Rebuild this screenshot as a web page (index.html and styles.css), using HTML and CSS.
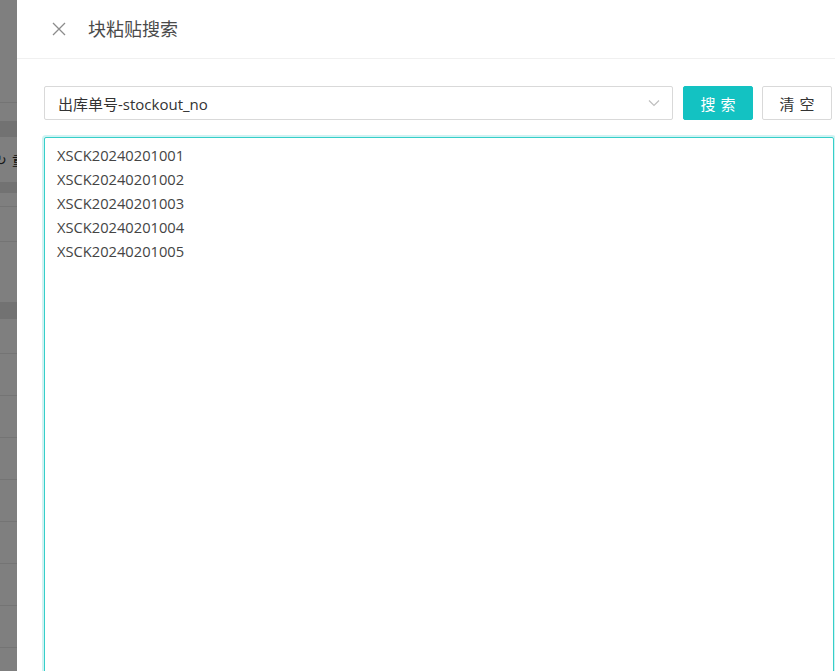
FILE: index.html
```html
<!DOCTYPE html>
<html lang="zh-CN">
<head>
    <meta charset="UTF-8">
    <meta name="viewport" content="width=device-width, initial-scale=1.0">
    <title>块粘贴搜索</title>
    <link rel="stylesheet" href="styles.css">
</head>
<body>
    <!-- page behind the drawer -->
    <div class="page">
        <div class="page-top"></div>
        <div class="page-space"></div>
        <div class="page-band"></div>
        <div class="page-toolbar"><span class="reload">&#8635;</span> <span class="reset">重置</span></div>
        <div class="page-band small"></div>
        <div class="page-row short"></div>
        <div class="page-row mid"></div>
        <div class="page-row tall"></div>
        <div class="page-band head"></div>
        <div class="page-row first"></div>
        <div class="page-row"></div>
        <div class="page-row"></div>
        <div class="page-row"></div>
        <div class="page-row"></div>
        <div class="page-row"></div>
        <div class="page-row"></div>
        <div class="page-row"></div>
    </div>

    <div class="mask"></div>

    <div class="drawer">
        <div class="drawer-header">
            <span class="drawer-close">
                <svg width="14" height="14" viewBox="0 0 14 14"><path d="M1 1 L13 13 M13 1 L1 13" stroke="#8c8c8c" stroke-width="1.3" fill="none"/></svg>
            </span>
            <div class="drawer-title">块粘贴搜索</div>
        </div>
        <div class="drawer-body">
            <div class="search-row">
                <div class="select">
                    <span class="select-value">出库单号-stockout_no</span>
                    <svg class="select-arrow" width="12" height="8" viewBox="0 0 12 8"><path d="M1 1.5 L6 6.5 L11 1.5" stroke="#bfbfbf" stroke-width="1.2" fill="none"/></svg>
                </div>
                <button class="btn btn-primary"><span>搜索</span></button>
                <button class="btn"><span>清空</span></button>
            </div>
            <textarea class="paste-box">XSCK20240201001
XSCK20240201002
XSCK20240201003
XSCK20240201004
XSCK20240201005</textarea>
        </div>
    </div>
</body>
</html>
```

FILE: styles.css
```css
:root {
    --primary-color: #13c2c2;
    --border-color: #d9d9d9;
    --text-color: #333333;
}

body, html {
    height: 100%;
    margin: 0;
    overflow: hidden;
    font-family: "Open Sans", "Noto Sans CJK SC", sans-serif;
    background-color: #ffffff;
    color: var(--text-color);
}

/* background page */
.page {
    width: 100%;
}

.page-top {
    height: 102px;
    border-bottom: 1px solid #e8e8e8;
}

.page-space {
    height: 18px;
}

.page-band {
    height: 16px;
    background-color: #e4e4e4;
}

.page-band.small {
    height: 11px;
}

.page-band.head {
    height: 17px;
}

.page-toolbar {
    height: 45px;
    display: flex;
    align-items: center;
    margin-left: -5px;
    gap: 5px;
    font-size: 14px;
}

.reload {
    color: #333;
}

.reset {
    color: #222;
}

.page-row {
    height: 41px;
    border-bottom: 1px solid #e8e8e8;
}

.page-row.short {
    height: 13px;
}

.page-row.mid {
    height: 34px;
}

.page-row.tall {
    height: 60px;
    border-bottom: none;
}

.page-row.first {
    height: 34px;
}

.mask {
    position: fixed;
    inset: 0;
    background-color: rgba(0, 0, 0, 0.5);
}

/* drawer */
.drawer {
    position: fixed;
    top: 0;
    bottom: 0;
    left: 17px;
    right: 0;
    background-color: #ffffff;
    display: flex;
    flex-direction: column;
}

.drawer-header {
    flex-shrink: 0;
    height: 58px;
    border-bottom: 1px solid #f0f0f0;
    display: flex;
    align-items: center;
    padding-left: 35px;
}

.drawer-close {
    display: flex;
    width: 14px;
    height: 14px;
    margin-right: 22px;
}

.drawer-title {
    font-size: 18px;
    color: #4a4a4a;
    line-height: 24px;
}

.drawer-body {
    flex-shrink: 0;
    padding: 27px 0 0 27px;
    display: flex;
    flex-direction: column;
}

.search-row {
    display: flex;
    align-items: center;
    margin-right: 3px;
}

.select {
    flex: 1;
    height: 34px;
    border: 1px solid var(--border-color);
    border-radius: 2px;
    box-sizing: border-box;
    display: flex;
    align-items: center;
    justify-content: space-between;
    padding: 0 12px 0 13px;
    font-size: 15px;
    color: #333;
}

.btn {
    width: 70px;
    height: 34px;
    margin-left: 9px;
    border: 1px solid var(--border-color);
    border-radius: 2px;
    background-color: #ffffff;
    color: #333;
    font-family: "Open Sans", "Noto Sans CJK SC", sans-serif;
    font-size: 15px;
    padding: 0;
    cursor: pointer;
}

.btn span {
    letter-spacing: 5px;
    margin-right: -5px;
}

.btn-primary {
    margin-left: 10px;
    background-color: var(--primary-color);
    border-color: var(--primary-color);
    color: #ffffff;
}

.paste-box {
    margin-top: 17px;
    margin-right: 1px;
    height: 560px;
    border: 1px solid #36cfc9;
    border-radius: 2px;
    box-shadow: 0 0 0 2px rgba(19, 194, 194, 0.2);
    padding: 5px 12px;
    font-family: "Open Sans", "Noto Sans CJK SC", sans-serif;
    font-size: 14.7px;
    line-height: 24px;
    color: #444;
    resize: none;
    outline: none;
}
```
